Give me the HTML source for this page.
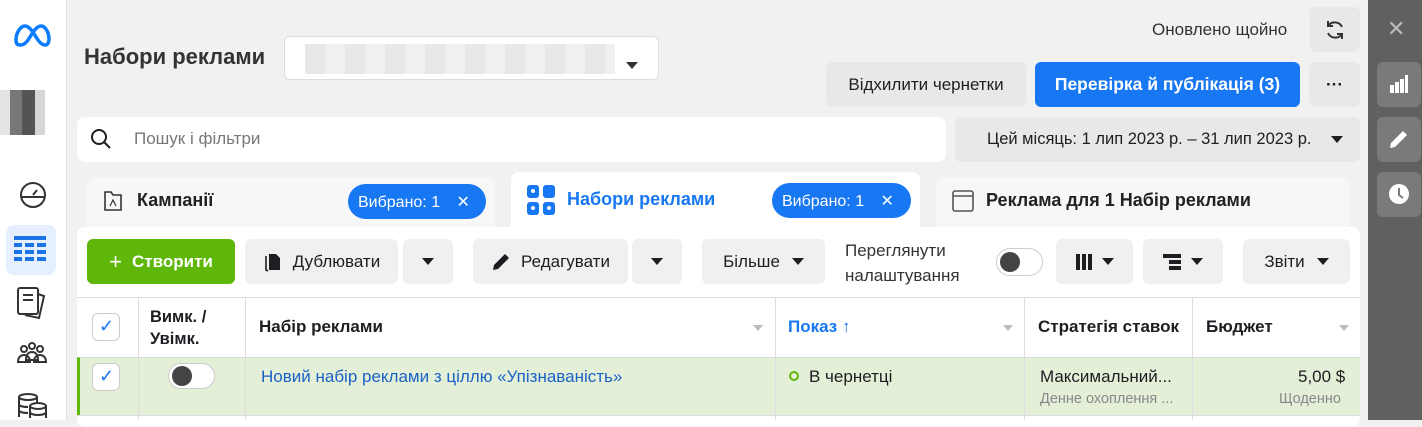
<!DOCTYPE html>
<html><head><meta charset="utf-8"><style>
*{box-sizing:border-box;margin:0;padding:0}
body{width:1422px;height:420px;overflow:hidden;background:#f1f1f1;font-family:"Liberation Sans",sans-serif;color:#1c1e21;position:relative;font-size:17px}
.a{position:absolute}
.btn{position:absolute;background:#e8e8e8;border-radius:6px;display:flex;align-items:center;justify-content:center;font-size:17px;color:#1c1e21}
.tri{width:0;height:0;border-left:6px solid transparent;border-right:6px solid transparent;border-top:7px solid #1c1e21;display:inline-block}
.vl{position:absolute;top:298px;height:122px;width:1px;background:#ddd}
.cb{position:absolute;width:28px;height:28px;border:1px solid #ccc;border-radius:6px;background:#fff}
.sm{position:absolute;width:0;height:0;border-left:5px solid transparent;border-right:5px solid transparent;border-top:6px solid #bbb}
</style></head><body>
<div class="a" style="left:0;top:0;width:67px;height:420px;background:#fff;border-right:1px solid #ddd"></div>
<svg class="a" style="left:12px;top:22px" width="40" height="26" viewBox="0 0 40 26"><path d="M4 18c0-8 5-14 9-14 5 0 9 8 13 14 3 4 5 5 7 5 3 0 4-3 4-6 0-7-4-13-8-13-5 0-9 8-13 14-3 4-5 5-8 5-3 0-4-2-4-5z" fill="none" stroke="#0a7cff" stroke-width="3.5"/></svg>
<div class="a" style="left:0;top:90px;width:45px;height:45px;background:linear-gradient(90deg,#ddd 0 10px,#555 10px 22px,#2a2a2a 22px 35px,#ccc 35px);opacity:.8"></div>
<svg class="a" style="left:18px;top:180px" width="30" height="30" viewBox="0 0 30 30" fill="none" stroke="#333" stroke-width="2"><circle cx="15" cy="15" r="12"/><path d="M3 17h24M15 15l4-5"/></svg>
<div class="a" style="left:6px;top:225px;width:50px;height:50px;background:#e5efff;border-radius:8px"></div>
<svg class="a" style="left:14px;top:236px" width="32" height="28" viewBox="0 0 32 28" fill="#1b74e4"><rect x="0" y="0" width="32" height="4"/><rect x="0" y="7" width="8" height="4"/><rect x="11" y="7" width="9" height="4"/><rect x="23" y="7" width="9" height="4"/><rect x="0" y="14" width="8" height="4"/><rect x="11" y="14" width="9" height="4"/><rect x="23" y="14" width="9" height="4"/><rect x="0" y="21" width="8" height="4"/><rect x="11" y="21" width="9" height="4"/><rect x="23" y="21" width="9" height="4"/></svg>
<svg class="a" style="left:16px;top:286px" width="32" height="34" viewBox="0 0 32 34" fill="none" stroke="#333" stroke-width="2"><rect x="2" y="2" width="20" height="26" rx="2"/><path d="M22 8l6 2-5 22-14-3M7 9h10M7 14h10"/></svg>
<svg class="a" style="left:16px;top:340px" width="32" height="28" viewBox="0 0 32 28" fill="none" stroke="#333" stroke-width="2"><circle cx="8" cy="9" r="3"/><circle cx="16" cy="6" r="3"/><circle cx="24" cy="9" r="3"/><path d="M2 22c0-5 3-7 6-7s6 2 6 7zM18 22c0-5 3-7 6-7s6 2 6 7zM10 20c0-6 3-8 6-8s6 2 6 8z"/></svg>
<svg class="a" style="left:16px;top:392px" width="32" height="28" viewBox="0 0 32 28" fill="none" stroke="#333" stroke-width="2"><ellipse cx="12" cy="5" rx="9" ry="3"/><path d="M3 5v20M21 5v5M3 12c0 2 4 3 9 3M3 18c0 2 4 3 9 3"/><ellipse cx="22" cy="14" rx="8" ry="3"/><path d="M14 14v12M30 14v12M14 20c0 2 4 3 8 3s8-1 8-3"/></svg>
<div class="a" style="left:84px;top:44px;font-size:22px;font-weight:bold;color:#333">Набори реклами</div>
<div class="a" style="left:284px;top:36px;width:375px;height:44px;background:#fff;border:1px solid #ddd;border-radius:6px"></div>
<div class="a" style="left:305px;top:44px;width:310px;height:30px;background:repeating-linear-gradient(90deg,#e6e6e6 0 20px,#efefef 20px 40px);opacity:.9"></div>
<div class="a" style="left:626px;top:54px"><span class="tri" style="border-top-color:#333"></span></div>
<div class="a" style="left:1152px;top:20px;font-size:17px;color:#333">Оновлено щойно</div>
<div class="btn" style="left:1310px;top:7px;width:50px;height:45px"><svg width="22" height="22" viewBox="0 0 22 22" fill="none" stroke="#333" stroke-width="2"><path d="M18 8A8 8 0 0 0 4 7M4 14a8 8 0 0 0 14 1M4 2v5h5M18 20v-5h-5"/></svg></div>
<div class="btn" style="left:826px;top:62px;width:200px;height:45px">Відхилити чернетки</div>
<div class="btn" style="left:1035px;top:62px;width:265px;height:45px;background:#1877f2;color:#fff;font-weight:bold;font-size:17.5px">Перевірка й публікація (3)</div>
<div class="btn" style="left:1309px;top:62px;width:51px;height:45px;font-weight:bold">···</div>
<div class="a" style="left:77px;top:117px;width:869px;height:45px;background:#fff;border-radius:8px"></div>
<svg class="a" style="left:90px;top:128px" width="22" height="22" viewBox="0 0 22 22" fill="none" stroke="#1c1e21" stroke-width="2"><circle cx="9" cy="9" r="7"/><path d="M14 14l6 6"/></svg>
<div class="a" style="left:134px;top:129px;color:#777;font-size:17px">Пошук і фільтри</div>
<div class="btn" style="left:955px;top:117px;width:405px;height:45px;justify-content:flex-start;padding-left:32px;font-size:16.5px">Цей місяць: 1 лип 2023 р. – 31 лип 2023 р.<span class="tri" style="margin-left:20px"></span></div>
<div class="a" style="left:87px;top:177px;width:408px;height:55px;background:#f7f7f7;border-radius:8px 8px 0 0"></div>
<svg class="a" style="left:103px;top:190px" width="20" height="22" viewBox="0 0 20 22" fill="none" stroke="#333" stroke-width="1.6"><path d="M2 2h6l2 3h8v15H2z"/><path d="M7 16l3-6 3 6" stroke-width="1.2"/></svg>
<div class="a" style="left:137px;top:190px;font-size:18px;font-weight:bold;color:#222">Кампанії</div>
<div class="a" style="left:348px;top:184px;width:138px;height:35px;background:#1877f2;border-radius:18px;color:#fff;font-size:16px;padding:8px 0 0 10px">Вибрано: 1 <span style="margin-left:12px">✕</span></div>
<div class="a" style="left:511px;top:172px;width:409px;height:60px;background:#fff;border-radius:8px 8px 0 0"></div>
<svg class="a" style="left:527px;top:185px" width="28" height="30" viewBox="0 0 28 30" fill="#1877f2"><rect x="0" y="0" width="12" height="13" rx="3"/><rect x="16" y="0" width="12" height="13" rx="3"/><rect x="0" y="17" width="12" height="13" rx="3"/><rect x="16" y="17" width="12" height="13" rx="3"/><circle cx="6" cy="6" r="2" fill="#fff"/><circle cx="6" cy="23" r="2" fill="#fff"/><circle cx="22" cy="23" r="2" fill="#fff"/></svg>
<div class="a" style="left:567px;top:189px;font-size:18px;font-weight:bold;color:#1877f2">Набори реклами</div>
<div class="a" style="left:772px;top:183px;width:139px;height:35px;background:#1877f2;border-radius:18px;color:#fff;font-size:16px;padding:8px 0 0 10px">Вибрано: 1 <span style="margin-left:12px">✕</span></div>
<div class="a" style="left:936px;top:177px;width:414px;height:55px;background:#f7f7f7;border-radius:8px 8px 0 0"></div>
<svg class="a" style="left:952px;top:190px" width="22" height="22" viewBox="0 0 22 22" fill="none" stroke="#555" stroke-width="1.6"><rect x="1" y="1" width="20" height="20" rx="2"/><path d="M1 6h20"/></svg>
<div class="a" style="left:986px;top:190px;font-size:18px;font-weight:bold;color:#222">Реклама для 1 Набір реклами</div>
<div class="a" style="left:77px;top:227px;width:1283px;height:200px;background:#fff;border-radius:8px"></div>
<div class="btn" style="left:87px;top:239px;width:148px;height:45px;background:#5fb709;color:#fff;font-weight:bold;font-size:17px"><span style="font-weight:normal;font-size:22px;margin-right:10px">+</span>Створити</div>
<div class="btn" style="left:245px;top:239px;width:153px;height:45px;background:#f0f0f0">
<svg width="20" height="20" viewBox="0 0 20 20" style="margin-right:10px"><path d="M6 2h7l4 4v12H6z" fill="#1c1e21"/><path d="M3 4v14l2 1" fill="none" stroke="#1c1e21" stroke-width="1.6"/></svg>Дублювати</div>
<div class="btn" style="left:403px;top:239px;width:50px;height:45px;background:#f0f0f0"><span class="tri"></span></div>
<div class="btn" style="left:473px;top:239px;width:155px;height:45px;background:#f0f0f0"><svg width="20" height="20" viewBox="0 0 20 20" style="margin-right:10px"><path d="M2 18l1-5L14 2l4 4L7 17z" fill="#1c1e21"/></svg>Редагувати</div>
<div class="btn" style="left:632px;top:239px;width:50px;height:45px;background:#f0f0f0"><span class="tri"></span></div>
<div class="btn" style="left:702px;top:239px;width:123px;height:45px;background:#f0f0f0">Більше<span class="tri" style="margin-left:12px"></span></div>
<div class="a" style="left:845px;top:238px;font-size:17px;line-height:25px;color:#333">Переглянути<br>налаштування</div>
<div class="a" style="left:996px;top:248px;width:47px;height:28px;border:1px solid #ccc;border-radius:14px;background:#fff"><div style="position:absolute;left:3px;top:3px;width:20px;height:20px;border-radius:50%;background:#444"></div></div>
<div class="btn" style="left:1056px;top:239px;width:77px;height:45px;background:#f0f0f0"><span style="display:inline-block;width:16px;height:16px;background:linear-gradient(90deg,#1c1e21 0 4px,transparent 4px 6px,#1c1e21 6px 10px,transparent 10px 12px,#1c1e21 12px);margin-right:10px"></span><span class="tri"></span></div>
<div class="btn" style="left:1143px;top:239px;width:80px;height:45px;background:#f0f0f0"><svg width="18" height="16" viewBox="0 0 18 16" style="margin-right:10px" fill="#1c1e21"><rect x="0" y="0" width="18" height="4"/><rect x="6" y="6" width="12" height="4"/><rect x="6" y="12" width="12" height="4"/></svg><span class="tri"></span></div>
<div class="btn" style="left:1243px;top:239px;width:107px;height:45px;background:#f0f0f0">Звіти<span class="tri" style="margin-left:12px"></span></div>
<div class="a" style="left:77px;top:297px;width:1283px;height:1px;background:#ddd"></div>
<div class="a" style="left:77px;top:357px;width:1283px;height:58px;background:#e4efd8;border-top:1px solid #d6dccf;border-left:3px solid #5fb709"></div>
<div class="a" style="left:77px;top:415px;width:1283px;height:1px;background:#ddd"></div>
<div class="vl" style="left:138px"></div><div class="vl" style="left:245px"></div><div class="vl" style="left:775px"></div><div class="vl" style="left:1024px"></div><div class="vl" style="left:1192px"></div>
<div class="cb" style="left:92px;top:313px"></div><div class="a" style="left:99px;top:316px;color:#1877f2;font-size:18px">✓</div>
<div class="cb" style="left:92px;top:363px"></div><div class="a" style="left:99px;top:366px;color:#1877f2;font-size:18px">✓</div>
<div class="a" style="left:150px;top:306px;font-weight:bold;font-size:16.5px;line-height:22px">Вимк. /<br>Увімк.</div>
<div class="a" style="left:259px;top:317px;font-weight:bold;font-size:17px">Набір реклами</div>
<div class="sm" style="left:753px;top:325px"></div>
<div class="a" style="left:788px;top:317px;font-weight:bold;font-size:17px;color:#1877f2">Показ ↑</div>
<div class="sm" style="left:1003px;top:325px"></div>
<div class="a" style="left:1038px;top:317px;font-weight:bold;font-size:17px">Стратегія ставок</div>
<div class="a" style="left:1206px;top:317px;font-weight:bold;font-size:17px">Бюджет</div>
<div class="sm" style="left:1339px;top:325px"></div>
<div class="a" style="left:168px;top:363px;width:47px;height:26px;border:1px solid #ccc;border-radius:13px;background:#fff"><div style="position:absolute;left:3px;top:2px;width:20px;height:20px;border-radius:50%;background:#444"></div></div>
<div class="a" style="left:261px;top:367px;font-size:17px;color:#1b62c7">Новий набір реклами з ціллю «Упізнаваність»</div>
<div class="a" style="left:789px;top:371px;width:10px;height:10px;border:2px solid #5fb709;border-radius:50%"></div>
<div class="a" style="left:809px;top:367px;font-size:17px">В чернетці</div>
<div class="a" style="left:1040px;top:367px;font-size:17px">Максимальний...</div>
<div class="a" style="left:1040px;top:391px;font-size:14.5px;color:#888">Денне охоплення ...</div>
<div class="a" style="left:1298px;top:367px;font-size:17px">5,00 $</div>
<div class="a" style="left:1279px;top:391px;font-size:14.5px;color:#888">Щоденно</div>
<div class="a" style="left:1368px;top:0;width:54px;height:420px;background:#606060"></div>
<div class="a" style="left:1387px;top:16px;color:#bbb;font-size:22px">✕</div>
<div class="a" style="left:1377px;top:62px;width:44px;height:45px;background:#7a7a7a;border-radius:6px"></div>
<svg class="a" style="left:1389px;top:75px" width="20" height="18" viewBox="0 0 20 18" fill="#fff"><rect x="1" y="10" width="4" height="8"/><rect x="6" y="7" width="4" height="11"/><rect x="11" y="4" width="4" height="14"/><rect x="16" y="0" width="3" height="18"/></svg>
<div class="a" style="left:1377px;top:117px;width:44px;height:45px;background:#7a7a7a;border-radius:6px"></div>
<svg class="a" style="left:1388px;top:128px" width="22" height="22" viewBox="0 0 22 22" fill="#fff"><path d="M2 20l1-5L15 3l4 4L7 19z"/></svg>
<div class="a" style="left:1377px;top:172px;width:44px;height:45px;background:#7a7a7a;border-radius:6px"></div>
<svg class="a" style="left:1388px;top:183px" width="22" height="22" viewBox="0 0 22 22"><circle cx="11" cy="11" r="10" fill="#fff"/><path d="M11 5v7l4 3" stroke="#7a7a7a" stroke-width="2" fill="none"/></svg>
</body></html>
